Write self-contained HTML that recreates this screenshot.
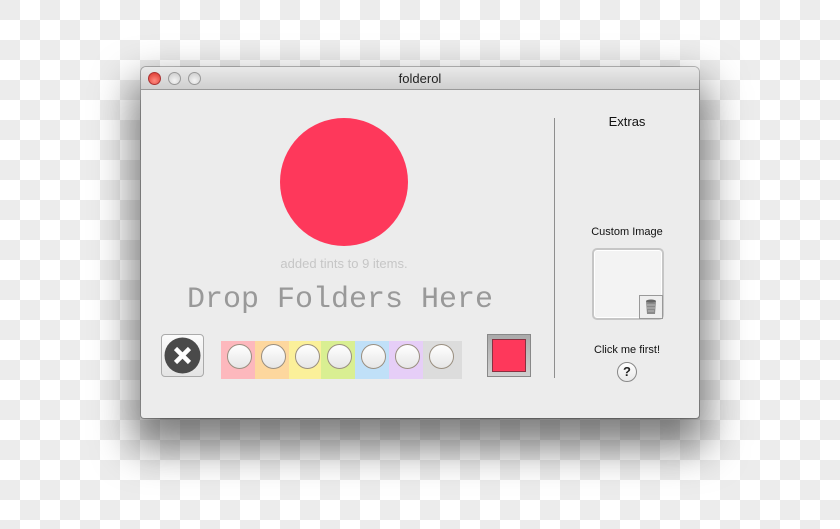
<!DOCTYPE html>
<html><head><style>
*{margin:0;padding:0;box-sizing:border-box}
html,body{width:840px;height:529px;overflow:hidden}
body{position:relative;background-color:#fff;
background-image:conic-gradient(#fff 0 25%,#ececec 0 50%,#fff 0 75%,#ececec 0);background-size:40px 40px;background-position:0 0;
font-family:"Liberation Sans",sans-serif}
.win{position:absolute;left:141px;top:67px;width:558px;height:351px;background:#ececec;border-radius:5px 5px 3px 3px;
box-shadow:0 22px 40px 8px rgba(0,0,0,.5),0 0 0 1px rgba(0,0,0,.25);overflow:hidden}
.tb{height:23px;background:linear-gradient(#e9e9e9,#cfcfcf);border-bottom:1px solid #999;text-align:center;font-size:13px;line-height:23px;color:#222}
.l{position:absolute;top:5px;width:13px;height:13px;border-radius:50%;border:1px solid #999;background:radial-gradient(circle at 50% 70%,#f4f4f4,#c8c8c8)}
.abs{position:absolute}
.ball{position:absolute;width:25px;height:25px;border-radius:50%;border:1px solid #9a8f80;background:linear-gradient(#fff,#e6e6e6);top:3px}
</style></head><body>
<div class="win">
<div class="tb">folderol</div>
<div class="l" style="left:7px;background:radial-gradient(circle at 50% 70%,#ff8a80,#d9332a);border-color:#a33"></div>
<div class="l" style="left:27px"></div>
<div class="l" style="left:47px"></div>
<div class="abs" style="left:139px;top:51px;width:128px;height:128px;border-radius:50%;background:#fe385b"></div>
<div class="abs" style="left:0;width:406px;top:189px;text-align:center;font-size:13px;color:#c6c6c6">added tints to 9 items.</div>
<div class="abs" style="left:46px;top:216px;font-family:'Liberation Mono',monospace;font-size:30px;color:#999;white-space:nowrap">Drop Folders Here</div>
<div class="abs" style="left:20px;top:267px;width:43px;height:43px;border:1px solid #aaa;border-radius:4px;background:linear-gradient(#fbfbfb,#e4e4e4)">
 <svg width="41" height="41" viewBox="0 0 41 41"><circle cx="20.5" cy="20.5" r="18" fill="#4a4a4a"/><path d="M13.5 13.5L27.5 27.5M27.5 13.5L13.5 27.5" stroke="#fff" stroke-width="4.5" stroke-linecap="butt"/></svg>
</div>
<div class="abs" style="left:80px;top:274px;width:241px;height:38px;background:linear-gradient(90deg,#fdb8bd 0 34px,#fdd79e 34px 68px,#fbf09a 68px 100px,#d9ef92 100px 134px,#c0e0f8 134px 168px,#e6cef7 168px 202px,#dcdcdc 202px)">
 <div class="ball" style="left:6px"></div><div class="ball" style="left:40px"></div><div class="ball" style="left:74px"></div><div class="ball" style="left:106px"></div><div class="ball" style="left:140px"></div><div class="ball" style="left:174px"></div><div class="ball" style="left:208px"></div>
</div>
<div class="abs" style="left:346px;top:267px;width:44px;height:43px;border:1px solid #888;background:linear-gradient(#aaa,#cfcfcf);padding:4px">
 <div style="width:100%;height:100%;background:#fe385b;border:1px solid #8a3040"></div>
</div>
<div class="abs" style="left:413px;top:51px;width:1px;height:260px;background:#8e8e8e"></div>
<div class="abs" style="left:414px;width:144px;top:47px;text-align:center;font-size:13px;color:#111">Extras</div>
<div class="abs" style="left:414px;width:144px;top:159px;text-align:center;font-size:11px;color:#111">Custom Image</div>
<div class="abs" style="left:451px;top:181px;width:72px;height:72px;border:2px solid #c6c6c6;border-radius:5px;background:#f3f3f3;box-shadow:inset 0 0 0 1px #fff">
 <div style="position:absolute;right:-1px;bottom:-1px;width:24px;height:24px;border:1px solid #999;background:#eee">
  <svg width="22" height="22" viewBox="0 0 22 22"><path d="M6 5h10l-1 13H7z" fill="#8a8a8a"/><ellipse cx="11" cy="5" rx="5" ry="1.5" fill="#666"/><path d="M7 9h8M7 12h8M8 15h6" stroke="#bbb" stroke-width="1"/></svg>
 </div>
</div>
<div class="abs" style="left:414px;width:144px;top:277px;text-align:center;font-size:11px;color:#111">Click me first!</div>
<div class="abs" style="left:476px;top:295px;width:20px;height:20px;border-radius:50%;border:1px solid #888;background:linear-gradient(#fff,#e8e8e8);text-align:center;font-size:13px;font-weight:bold;line-height:18px;color:#222">?</div>
</div>
</body></html>
